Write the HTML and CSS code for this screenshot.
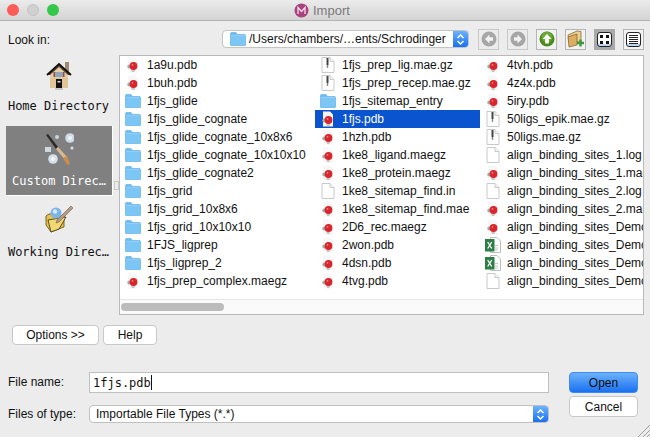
FILE: index.html
```html
<!DOCTYPE html>
<html lang="en">
<head>
    <meta charset="UTF-8">
    <title>Import</title>
    <link rel="stylesheet" href="styles.css">
</head>
<body>
    <svg class="defs" width="0" height="0">
        <defs>
            <symbol id="folder" viewBox="0 0 16 14">
                <path d="M0.5 13V1.5Q0.5 0.5 1.5 0.5H6L7.5 2.5H14.5Q15.5 2.5 15.5 3.5V13Q15.5 13.5 15 13.5H1Q0.5 13.5 0.5 13Z" fill="#6fbdf2" stroke="#5aa8e2" stroke-width="0.6"/>
                <path d="M0.8 4H15.2V13.2H0.8Z" fill="#7cc6f6"/>
                <path d="M0.8 3.6H15.2" stroke="#a5d9f9" stroke-width="0.7"/>
            </symbol>
            <symbol id="doc" viewBox="0 0 13 16">
                <path d="M0.5 0.5H8.5L12.5 4.5V15.5H0.5Z" fill="#fff" stroke="#c9c9c9"/>
                <path d="M8.5 0.5V4.5H12.5" fill="#f4f4f4" stroke="#c9c9c9"/>
            </symbol>
            <symbol id="gz" viewBox="0 0 13 16">
                <path d="M0.5 0.5H8.5L12.5 4.5V15.5H0.5Z" fill="#fff" stroke="#c9c9c9"/>
                <path d="M8.5 0.5V4.5H12.5" fill="#f4f4f4" stroke="#c9c9c9"/>
                <path d="M6 1V8" stroke="#444" stroke-width="2"/>
                <path d="M6 8V11" stroke="#888" stroke-width="1.4"/>
            </symbol>
            <symbol id="mol" viewBox="0 0 16 16">
                <path d="M3 0.500H10L13 3.500V15.500H3Z" fill="#f7f7f7"/>
                <circle cx="4.200" cy="9.500" r="1.900" fill="#a8a8a8"/>
                <circle cx="8.200" cy="13.500" r="1.800" fill="#c4c4c4"/>
                <circle cx="8.500" cy="9" r="3.900" fill="#d9252b"/>
                <circle cx="7.500" cy="7.800" r="0.900" fill="#f08a8a"/>
            </symbol>
            <symbol id="xls" viewBox="0 0 16 16">
                <path d="M5.5 0.5H12L15.5 4V15.5H5.5Z" fill="#fff" stroke="#bdbdbd"/>
                <path d="M10 8.5h3M10 11h3M10 13h3" stroke="#c5c5c5"/>
                <rect x="0" y="2" width="9.500" height="12.500" fill="#2d7d46"/>
                <path d="M2.700 5L6.700 11.500M6.700 5L2.700 11.500" stroke="#fff" stroke-width="1.300"/>
            </symbol>
        </defs>
    </svg>

    <div class="titlebar">
        <span class="light light-close"></span>
        <span class="light light-min"></span>
        <span class="light light-zoom"></span>
        <div class="title">
            <svg class="title-logo" width="15" height="15" viewBox="0 0 15 15">
                <circle cx="7.500" cy="7.500" r="7" fill="#a9437f"/>
                <path d="M4 11V4.500L7.500 8.500L11 4.500V11" fill="none" stroke="#f3dce9" stroke-width="1.300"/>
            </svg>
            <span>Import</span>
        </div>
    </div>

    <div class="toolbar">
        <span class="look-label">Look in:</span>
        <div class="combo path-combo">
            <svg class="combo-folder" width="16" height="14"><use href="#folder"/></svg>
            <span class="combo-text">/Users/chambers/…ents/Schrodinger</span>
            <span class="combo-arrows">
                <svg width="9" height="13" viewBox="0 0 9 13"><path d="M1.500 5L4.500 2L7.500 5M1.500 8L4.500 11L7.500 8" fill="none" stroke="#fff" stroke-width="1.500"/></svg>
            </span>
        </div>
        <div class="tool-buttons">
            <span class="tool-btn">
                <svg width="16" height="16" viewBox="0 0 16 16"><circle cx="8" cy="8" r="7.500" fill="#a6a6a6"/><path d="M8.500 3.500L4 8L8.500 12.500V9.700H12V6.300H8.500Z" fill="#f1f1f1"/></svg>
            </span>
            <span class="tool-btn">
                <svg width="16" height="16" viewBox="0 0 16 16"><circle cx="8" cy="8" r="7.500" fill="#a6a6a6"/><path d="M7.500 3.500L12 8L7.500 12.500V9.700H4V6.300H7.500Z" fill="#f1f1f1"/></svg>
            </span>
            <span class="tool-btn tool-on">
                <svg width="16" height="16" viewBox="0 0 16 16"><circle cx="8" cy="8" r="7.500" fill="#4a8a1e"/><circle cx="8" cy="6" r="5.500" fill="#6aa935"/><path d="M8 3L3.500 8H6.200V12.500H9.800V8H12.500Z" fill="#fff"/></svg>
            </span>
            <span class="tool-btn tool-on">
                <svg width="18" height="18" viewBox="0 0 18 18"><path d="M1 5L10 1L14 1.500V12H2Z" fill="#edd092" stroke="#7a5b25" stroke-width="0.700"/><path d="M1 7L10 4V15L2 17Z" fill="#dcae62" stroke="#7a5b25" stroke-width="0.700"/><path d="M13.500 9.500V16.500M10 13H17" stroke="#3f9b3a" stroke-width="2.400"/></svg>
            </span>
            <span class="tool-btn tool-pressed">
                <span class="view-icon">
                    <svg width="9" height="9" viewBox="0 0 9 9"><path d="M0 0h3v3H0zM6 0h3v3H6zM0 6h3v3H0zM6 6h3v3H6z" fill="#111"/></svg>
                </span>
            </span>
            <span class="tool-btn tool-on">
                <span class="view-icon">
                    <svg width="9" height="9" viewBox="0 0 9 9"><path d="M0 0.500h9M0 2.500h9M0 4.500h9M0 6.500h9M0 8.500h9" stroke="#222"/></svg>
                </span>
            </span>
        </div>
    </div>

    <div class="middle">
        <div class="sidebar">
            <div class="place place-first">
                <svg class="place-icon" width="26" height="30" viewBox="0 0 26 30">
                    <rect x="19" y="1" width="4" height="12" fill="#a08a70"/>
                    <path d="M4 12H22V27H4Z" fill="#e0c596"/>
                    <path d="M1 14L13 3L25 14" fill="#5b4636" stroke="#111" stroke-width="1.800"/>
                    <path d="M4 14L13 6L22 14V17H4Z" fill="#e4cfa6"/>
                    <rect x="9" y="11" width="8" height="5" fill="#8fa6bd"/>
                    <path d="M7.500 11H9V16H7.500ZM17 11H18.500V16H17Z" fill="#a8452f"/>
                    <rect x="10" y="18" width="6" height="9" fill="#111"/>
                    <rect x="11.500" y="20" width="3" height="1.500" fill="#ddd"/>
                    <path d="M9 27H17V29H9Z" fill="#c8c8c8"/>
                </svg>
                <span class="place-label">Home Directory</span>
            </div>
            <div class="place place-selected">
                <svg class="place-icon" width="30" height="34" viewBox="0 0 30 34">
                    <path d="M2 2L4 1L14 14L12 16Z" fill="#2b2b2b"/>
                    <path d="M12 16L14 14L24 25L21 27Z" fill="#d8b894"/>
                    <path d="M19 25L23 23L26 31L23 32Z" fill="#c98d4e"/>
                    <circle cx="13" cy="4" r="2" fill="#c9d4e0"/>
                    <circle cx="26" cy="5" r="4.800" fill="#cfdae6"/>
                    <circle cx="26" cy="5" r="2" fill="#eef3f8"/>
                    <circle cx="28" cy="15" r="1.600" fill="#d5dee8"/>
                    <rect x="1" y="14" width="6" height="5" fill="#cdd8e3"/>
                    <circle cx="9" cy="26" r="4.800" fill="#d7e0ea"/>
                    <circle cx="9" cy="26" r="2" fill="#f2f5f8"/>
                </svg>
                <span class="place-label">Custom Direc…</span>
            </div>
            <div class="place place-last">
                <svg class="place-icon" width="28" height="28" viewBox="0 0 28 28">
                    <path d="M1 11L4 9H10L12 11H19V22L6 27L1 20Z" fill="#e6c04f" stroke="#5c4a16" stroke-width="0.800"/>
                    <path d="M3 15L21 12L14 24L6 27Z" fill="#f2d873" stroke="#3a3010" stroke-width="0.800"/>
                    <circle cx="11" cy="8" r="5.500" fill="#7db4e8"/>
                    <circle cx="10" cy="6.500" r="2.200" fill="#d7e8f8"/>
                    <path d="M26 1L28 3L14 17L11 18L12 15Z" fill="#b79c84" stroke="#6b5a4a" stroke-width="0.600"/>
                </svg>
                <span class="place-label">Working Direc…</span>
            </div>
            <span class="splitter"></span>
        </div>

        <div class="file-list">
            <div class="columns">
                <div class="column col-first">
                    <div class="file"><svg class="ficon"><use href="#mol"/></svg><span>1a9u.pdb</span></div>
                    <div class="file"><svg class="ficon"><use href="#mol"/></svg><span>1buh.pdb</span></div>
                    <div class="file"><svg class="ficon"><use href="#folder"/></svg><span>1fjs_glide</span></div>
                    <div class="file"><svg class="ficon"><use href="#folder"/></svg><span>1fjs_glide_cognate</span></div>
                    <div class="file"><svg class="ficon"><use href="#folder"/></svg><span>1fjs_glide_cognate_10x8x6</span></div>
                    <div class="file"><svg class="ficon"><use href="#folder"/></svg><span>1fjs_glide_cognate_10x10x10</span></div>
                    <div class="file"><svg class="ficon"><use href="#folder"/></svg><span>1fjs_glide_cognate2</span></div>
                    <div class="file"><svg class="ficon"><use href="#folder"/></svg><span>1fjs_grid</span></div>
                    <div class="file"><svg class="ficon"><use href="#folder"/></svg><span>1fjs_grid_10x8x6</span></div>
                    <div class="file"><svg class="ficon"><use href="#folder"/></svg><span>1fjs_grid_10x10x10</span></div>
                    <div class="file"><svg class="ficon"><use href="#folder"/></svg><span>1FJS_ligprep</span></div>
                    <div class="file"><svg class="ficon"><use href="#folder"/></svg><span>1fjs_ligprep_2</span></div>
                    <div class="file"><svg class="ficon"><use href="#mol"/></svg><span>1fjs_prep_complex.maegz</span></div>
                </div>
                <div class="column col-second">
                    <div class="file"><svg class="ficon"><use href="#gz"/></svg><span>1fjs_prep_lig.mae.gz</span></div>
                    <div class="file"><svg class="ficon"><use href="#gz"/></svg><span>1fjs_prep_recep.mae.gz</span></div>
                    <div class="file"><svg class="ficon"><use href="#folder"/></svg><span>1fjs_sitemap_entry</span></div>
                    <div class="file file-selected"><svg class="ficon"><use href="#mol"/></svg><span>1fjs.pdb</span></div>
                    <div class="file"><svg class="ficon"><use href="#mol"/></svg><span>1hzh.pdb</span></div>
                    <div class="file"><svg class="ficon"><use href="#mol"/></svg><span>1ke8_ligand.maegz</span></div>
                    <div class="file"><svg class="ficon"><use href="#mol"/></svg><span>1ke8_protein.maegz</span></div>
                    <div class="file"><svg class="ficon"><use href="#doc"/></svg><span>1ke8_sitemap_find.in</span></div>
                    <div class="file"><svg class="ficon"><use href="#mol"/></svg><span>1ke8_sitemap_find.mae</span></div>
                    <div class="file"><svg class="ficon"><use href="#mol"/></svg><span>2D6_rec.maegz</span></div>
                    <div class="file"><svg class="ficon"><use href="#mol"/></svg><span>2won.pdb</span></div>
                    <div class="file"><svg class="ficon"><use href="#mol"/></svg><span>4dsn.pdb</span></div>
                    <div class="file"><svg class="ficon"><use href="#mol"/></svg><span>4tvg.pdb</span></div>
                </div>
                <div class="column col-third">
                    <div class="file"><svg class="ficon"><use href="#mol"/></svg><span>4tvh.pdb</span></div>
                    <div class="file"><svg class="ficon"><use href="#mol"/></svg><span>4z4x.pdb</span></div>
                    <div class="file"><svg class="ficon"><use href="#mol"/></svg><span>5iry.pdb</span></div>
                    <div class="file"><svg class="ficon"><use href="#gz"/></svg><span>50ligs_epik.mae.gz</span></div>
                    <div class="file"><svg class="ficon"><use href="#gz"/></svg><span>50ligs.mae.gz</span></div>
                    <div class="file"><svg class="ficon"><use href="#doc"/></svg><span>align_binding_sites_1.log</span></div>
                    <div class="file"><svg class="ficon"><use href="#mol"/></svg><span>align_binding_sites_1.mae</span></div>
                    <div class="file"><svg class="ficon"><use href="#doc"/></svg><span>align_binding_sites_2.log</span></div>
                    <div class="file"><svg class="ficon"><use href="#mol"/></svg><span>align_binding_sites_2.mae</span></div>
                    <div class="file"><svg class="ficon"><use href="#mol"/></svg><span>align_binding_sites_Demo</span></div>
                    <div class="file"><svg class="ficon"><use href="#xls"/></svg><span>align_binding_sites_Demo</span></div>
                    <div class="file"><svg class="ficon"><use href="#xls"/></svg><span>align_binding_sites_Demo</span></div>
                    <div class="file"><svg class="ficon"><use href="#doc"/></svg><span>align_binding_sites_Demo</span></div>
                </div>
            </div>
            <div class="hscroll"><span class="hscroll-thumb"></span></div>
        </div>
    </div>

    <div class="options-row">
        <button class="btn btn-options">Options &gt;&gt;</button>
        <button class="btn btn-help">Help</button>
    </div>

    <div class="form">
        <div class="form-fields">
            <div class="form-row row-name">
                <span class="form-label label-name">File name:</span>
                <div class="name-input"><span>1fjs.pdb</span><span class="caret"></span></div>
            </div>
            <div class="form-row row-type">
                <span class="form-label">Files of type:</span>
                <div class="combo type-combo">
                    <span class="combo-text">Importable File Types (*.*)</span>
                    <span class="combo-arrows">
                        <svg width="9" height="13" viewBox="0 0 9 13"><path d="M1.500 5L4.500 2L7.500 5M1.500 8L4.500 11L7.500 8" fill="none" stroke="#fff" stroke-width="1.500"/></svg>
                    </span>
                </div>
            </div>
        </div>
        <div class="form-actions">
            <button class="btn btn-open">Open</button>
            <button class="btn btn-cancel">Cancel</button>
        </div>
    </div>

    <svg class="grip" width="12" height="12" viewBox="0 0 12 12"><path d="M0 12L12 0M5 12L12 5M9 12L12 9" stroke="#8a8a8a" stroke-width="0.800"/></svg>
</body>
</html>
```

FILE: styles.css
```css
html, body {
    height: 100%;
}
body {
    margin: 0;
    width: 650px;
    height: 437px;
    overflow: hidden;
    position: relative;
    background-color: #ececec;
    font-family: "Liberation Sans", Arial, sans-serif;
    font-size: 12px;
    color: #111;
}
.defs {
    display: block;
    height: 0;
}

/* Title bar */
.titlebar {
    height: 20px;
    display: flex;
    align-items: center;
    position: relative;
    padding-left: 7px;
    gap: 8px;
    background: linear-gradient(#ebebeb, #d4d4d4);
    border-bottom: 1px solid #b4b4b4;
}
.light {
    width: 12px;
    height: 12px;
    border-radius: 50%;
}
.light-close { background-color: #fc5b57; }
.light-min { background-color: #d0d0d0; border: 1px solid #c2c2c2; width: 10px; height: 10px; }
.light-zoom { background-color: #34c84a; }
.title {
    position: absolute;
    left: 294px;
    top: 3px;
    display: flex;
    align-items: center;
    gap: 4px;
    font-size: 13px;
    color: #7a7a7a;
}

/* Look in row */
.toolbar {
    height: 34px;
    display: flex;
    align-items: center;
    padding-left: 8px;
}
.look-label {
    width: 214px;
    position: relative;
    top: 2px;
}
.combo {
    display: flex;
    align-items: center;
    height: 18px;
    background-color: #fff;
    border: 1px solid #c4c4c4;
    border-radius: 4px;
    box-sizing: border-box;
    overflow: hidden;
}
.path-combo {
    width: 247px;
    position: relative;
    top: 1px;
    padding-left: 7px;
}
.combo-folder {
    margin-right: 3px;
    flex: none;
}
.combo-text {
    flex: 1;
    white-space: nowrap;
}
.combo-arrows {
    width: 15px;
    align-self: stretch;
    display: flex;
    align-items: center;
    justify-content: center;
    background: linear-gradient(#6cb2fd, #1a70f0);
}
.tool-buttons {
    display: flex;
    gap: 8px;
    margin-left: 9px;
    position: relative;
    top: 1px;
}
.tool-btn {
    width: 21px;
    height: 21px;
    box-sizing: border-box;
    display: flex;
    align-items: center;
    justify-content: center;
    border: 1px solid #c8c8c8;
}
.tool-on {
    border-color: #b5b5b5;
    background-color: #f2f2f2;
}
.tool-pressed {
    background-color: #a9a9a9;
    border-color: #a9a9a9;
}
.view-icon {
    width: 15px;
    height: 15px;
    box-sizing: border-box;
    display: flex;
    align-items: center;
    justify-content: center;
    background-color: #fff;
    border: 1px solid #222;
    border-radius: 3px;
    box-shadow: inset 0 -2px 0 #bcd8f5;
}

/* Sidebar and file list */
.middle {
    display: flex;
    height: 260px;
}
.sidebar {
    width: 119px;
    flex: none;
    padding: 0 6px;
    box-sizing: border-box;
    position: relative;
}
.place {
    width: 107px;
    padding-right: 2px;
    box-sizing: border-box;
    display: flex;
    flex-direction: column;
    align-items: center;
    font-family: "DejaVu Sans Mono", monospace;
    font-size: 12px;
    white-space: nowrap;
}
.place-first {
    height: 71px;
    padding-top: 6px;
}
.place-icon {
    display: block;
    flex: none;
}
.place-label {
    margin-top: 8px;
}
.place-selected {
    height: 70px;
    background-color: #808080;
    color: #fff;
    padding-top: 7px;
    padding-right: 0;
    border-bottom: 1px solid #fff;
    border-right: 1px solid #fff;
}
.place-selected .place-label {
    margin-top: 7px;
}
.place-last {
    padding-top: 9px;
}
.place-last .place-label {
    margin-top: 12px;
}
.splitter {
    position: absolute;
    left: 114px;
    top: 126px;
    width: 3px;
    height: 7px;
    border: 1px solid #c8c8c8;
}
.file-list {
    width: 525px;
    height: 260px;
    box-sizing: border-box;
    display: flex;
    flex-direction: column;
    background-color: #fff;
    border: 1px solid #b9b9b9;
}
.columns {
    flex: 1;
    display: flex;
    overflow: hidden;
    border-bottom: 1px solid #e6e6e6;
}
.column {
    flex: none;
}
.col-first { width: 195px; }
.col-second { width: 165px; }
.col-third { width: 163px; }
.file {
    height: 18px;
    display: flex;
    align-items: center;
    padding-left: 5px;
    white-space: nowrap;
    overflow: hidden;
    font-size: 12px;
}
.ficon {
    width: 16px;
    height: 16px;
    flex: none;
    margin-right: 6px;
}
.file-selected {
    background-color: #0b54cf;
    color: #fff;
}
.hscroll {
    height: 14px;
    flex: none;
    background-color: #fafafa;
    display: flex;
    align-items: center;
    padding-left: 1px;
}
.hscroll-thumb {
    width: 103px;
    height: 8px;
    border-radius: 4px;
    background-color: #bcbcbc;
}

/* Options row */
.options-row {
    display: flex;
    gap: 4px;
    padding: 10px 0 0 12px;
}
.btn {
    height: 20px;
    padding: 0;
    box-sizing: border-box;
    background-color: #fff;
    border: 1px solid #c8c8c8;
    border-radius: 4px;
    font-family: "Liberation Sans", Arial, sans-serif;
    font-size: 12px;
    color: #111;
}
.btn-options { width: 87px; }
.btn-help { width: 54px; }

/* Bottom form */
.form {
    display: flex;
    padding: 27px 0 0 8px;
}
.form-fields {
    width: 541px;
}
.form-row {
    display: flex;
    align-items: center;
}
.form-label {
    width: 81px;
    flex: none;
}
.label-name {
    padding-bottom: 2px;
}
.row-name {
    height: 21px;
}
.name-input {
    width: 460px;
    height: 21px;
    box-sizing: border-box;
    display: flex;
    align-items: center;
    padding-left: 3px;
    background-color: #fff;
    border: 1px solid #c0c0c0;
    font-family: "DejaVu Sans Mono", monospace;
    font-size: 12px;
}
.caret {
    width: 1px;
    height: 15px;
    background-color: #111;
}
.row-type {
    margin-top: 12px;
    height: 18px;
}
.type-combo {
    width: 461px;
    padding-left: 6px;
    border-color: #c0c0c0;
}
.form-actions {
    display: flex;
    flex-direction: column;
    gap: 3px;
    margin-left: 20px;
}
.btn-open {
    width: 69px;
    height: 21px;
    border-color: #3d8cf5;
    background: linear-gradient(#6cb2fd, #1a70f0);
}
.btn-cancel {
    width: 69px;
    height: 21px;
}
.grip {
    position: absolute;
    right: 0;
    bottom: 0;
}
```
